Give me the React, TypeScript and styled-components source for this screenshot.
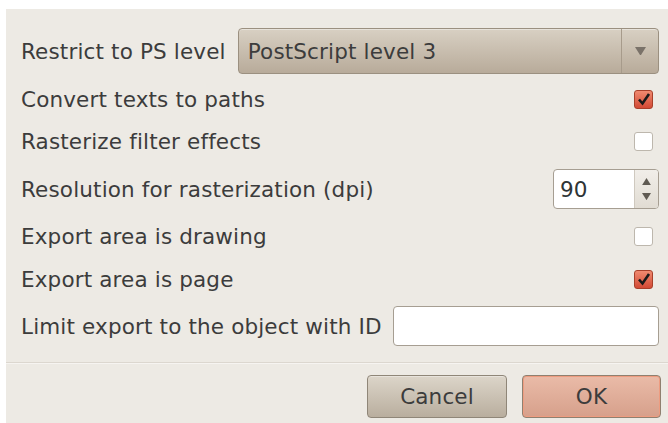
import React from "react";
import styled, { createGlobalStyle, css } from "styled-components";

const Global = createGlobalStyle`
  html, body { margin: 0; padding: 0; background: #ffffff; }
  body { font-family: "DejaVu Sans", "Liberation Sans", sans-serif; }
`;

const Dialog = styled.div`
  margin: 9px 0 0 6px;
  width: 662px;
  height: 414px;
  background: #edeae4;
  box-sizing: border-box;
  padding: 19px 9px 0 15px;
  display: flex;
  flex-direction: column;
  color: #3c3c3c;
  font-size: 21.5px;
  letter-spacing: 0.15px;
`;

const Row = styled.div<{ $h: number }>`
  height: ${(p) => p.$h}px;
  display: flex;
  align-items: center;
  justify-content: space-between;
  gap: 8px;
`;

const Label = styled.span`
  white-space: nowrap;
`;

const Combo = styled.div`
  flex: 1;
  margin-left: 4px;
  height: 46px;
  box-sizing: border-box;
  display: flex;
  border: 1px solid #9b9080;
  border-radius: 4px;
  background: linear-gradient(#d8d0c3, #b8ab9a);
  box-shadow: inset 0 1px 0 rgba(255, 255, 255, 0.4);
`;

const ComboText = styled.span`
  flex: 1;
  display: flex;
  align-items: center;
  padding-left: 9px;
`;

const ComboArrow = styled.span`
  width: 36px;
  border-left: 1px solid #a79b8b;
  display: flex;
  align-items: center;
  justify-content: center;
`;

const Check = styled.span<{ $on?: boolean }>`
  width: 19px;
  height: 19px;
  box-sizing: border-box;
  margin-right: 6px;
  border-radius: 3px;
  display: flex;
  align-items: center;
  justify-content: center;
  ${(p) =>
    p.$on
      ? css`
          border: 1px solid #a8402a;
          background: linear-gradient(#f08a70, #d24a35);
        `
      : css`
          border: 1px solid #bdb7ad;
          background: #ffffff;
        `}
`;

const Spin = styled.div`
  width: 106px;
  height: 40px;
  box-sizing: border-box;
  display: flex;
  border: 1px solid #a69e92;
  border-radius: 4px;
  background: #ffffff;
  overflow: hidden;
`;

const SpinValue = styled.span`
  flex: 1;
  display: flex;
  align-items: center;
  padding-left: 6px;
  color: #2e3436;
`;

const SpinButtons = styled.span`
  width: 23px;
  border-left: 1px solid #cfc9bf;
  background: linear-gradient(#f1eee9, #e1dcd3);
  display: flex;
  flex-direction: column;
  align-items: center;
  justify-content: space-evenly;
`;

const Entry = styled.div`
  width: 266px;
  height: 40px;
  box-sizing: border-box;
  border: 1px solid #a69e92;
  border-radius: 4px;
  background: #ffffff;
`;

const Separator = styled.div`
  margin: 16px -9px 0 -15px;
  height: 1px;
  background: #dcd7cf;
  border-bottom: 1px solid #f6f4f1;
`;

const ButtonBar = styled.div`
  display: flex;
  justify-content: flex-end;
  gap: 15px;
  margin-top: 11px;
  margin-right: -2px;
`;

const Button = styled.div<{ $default?: boolean }>`
  width: 140px;
  height: 43px;
  box-sizing: border-box;
  border-radius: 4px;
  display: flex;
  align-items: center;
  justify-content: center;
  ${(p) =>
    p.$default
      ? css`
          width: 139px;
          border: 1px solid #8f8070;
          background: linear-gradient(#eabba8, #d6a08b);
          box-shadow: inset 0 0 0 1px #ee9c80;
        `
      : css`
          border: 1px solid #8f8678;
          background: linear-gradient(#dcd5c9, #b9ae9e);
          box-shadow: inset 0 1px 0 rgba(255, 255, 255, 0.35);
        `}
`;

const Tick = () => (
  <svg width="14" height="14" viewBox="0 0 14 14">
    <path d="M2 7.5 L5.5 11.5 L12 2" fill="none" stroke="#1a1a1a" strokeWidth="2.6" strokeLinejoin="miter" />
  </svg>
);

const Triangle = ({ up, size = 10, color = "#6b6359" }: { up?: boolean; size?: number; color?: string }) => (
  <svg width={size} height={size * 0.8} viewBox="0 0 10 8">
    <path d={up ? "M5 0 L10 8 L0 8 Z" : "M0 0 L10 0 L5 8 Z"} fill={color} />
  </svg>
);

export default function App() {
  return (
    <>
      <Global />
      <Dialog>
        <Row $h={46}>
          <Label>Restrict to PS level</Label>
          <Combo>
            <ComboText>PostScript level 3</ComboText>
            <ComboArrow>
              <Triangle size={11} color="#7a7269" />
            </ComboArrow>
          </Combo>
        </Row>
        <Row $h={50}>
          <Label>Convert texts to paths</Label>
          <Check $on>
            <Tick />
          </Check>
        </Row>
        <Row $h={34}>
          <Label>Rasterize filter effects</Label>
          <Check />
        </Row>
        <Row $h={62}>
          <Label>Resolution for rasterization (dpi)</Label>
          <Spin>
            <SpinValue>90</SpinValue>
            <SpinButtons>
              <Triangle up size={9} color="#5f5a52" />
              <Triangle size={9} color="#5f5a52" />
            </SpinButtons>
          </Spin>
        </Row>
        <Row $h={32}>
          <Label>Export area is drawing</Label>
          <Check />
        </Row>
        <Row $h={54}>
          <Label>Export area is page</Label>
          <Check $on>
            <Tick />
          </Check>
        </Row>
        <Row $h={40}>
          <Label>Limit export to the object with ID</Label>
          <Entry />
        </Row>
        <Separator />
        <ButtonBar>
          <Button>Cancel</Button>
          <Button $default>OK</Button>
        </ButtonBar>
      </Dialog>
    </>
  );
}
